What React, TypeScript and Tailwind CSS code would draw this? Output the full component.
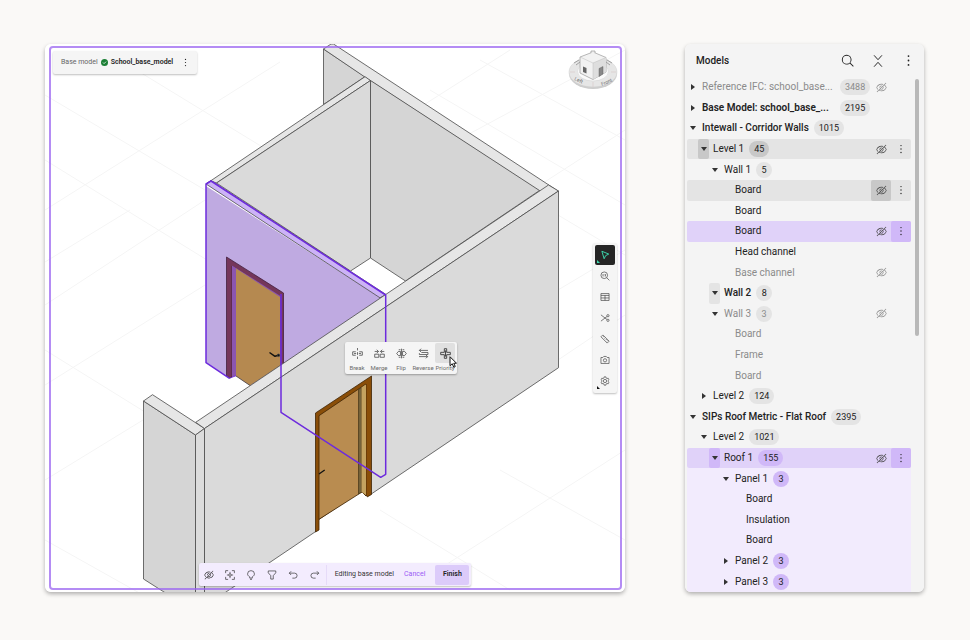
import React, { useState } from "react";
import clsx from "clsx";

type Row = {
  id: number;
  label: string;
  level: number;
  arrow?: "open" | "closed";
  count?: number;
  weight?: "medium" | "bold";
  muted?: boolean;
  truncated?: boolean;
  state?: "hover" | "selected" | "child";
  eye?: boolean;
  menu?: boolean;
  active?: "toggle" | "eye" | "menu" | "toggle-menu";
};

const rows: Row[] = [
  { id: 1, label: "Reference IFC: school_base...", level: 0, arrow: "closed", count: 3488, muted: true, truncated: true, eye: true },
  { id: 2, label: "Base Model: school_base_...", level: 0, arrow: "closed", count: 2195, weight: "bold", truncated: true },
  { id: 3, label: "Intewall - Corridor Walls", level: 0, arrow: "open", count: 1015, weight: "medium" },
  { id: 4, label: "Level 1", level: 1, arrow: "open", count: 45, state: "hover", eye: true, menu: true, active: "toggle" },
  { id: 5, label: "Wall 1", level: 2, arrow: "open", count: 5 },
  { id: 6, label: "Board", level: 3, state: "hover", eye: true, menu: true, active: "eye" },
  { id: 7, label: "Board", level: 3 },
  { id: 8, label: "Board", level: 3, state: "selected", eye: true, menu: true, active: "menu" },
  { id: 9, label: "Head channel", level: 3 },
  { id: 10, label: "Base channel", level: 3, muted: true, eye: true },
  { id: 11, label: "Wall 2", level: 2, arrow: "open", count: 8, weight: "medium", active: "toggle" },
  { id: 12, label: "Wall 3", level: 2, arrow: "open", count: 3, muted: true, eye: true },
  { id: 13, label: "Board", level: 3, muted: true },
  { id: 14, label: "Frame", level: 3, muted: true },
  { id: 15, label: "Board", level: 3, muted: true },
  { id: 16, label: "Level 2", level: 1, arrow: "closed", count: 124 },
  { id: 17, label: "SIPs Roof Metric - Flat Roof", level: 0, arrow: "open", count: 2395, weight: "medium" },
  { id: 18, label: "Level 2", level: 1, arrow: "open", count: 1021 },
  { id: 19, label: "Roof 1", level: 2, arrow: "open", count: 155, state: "selected", eye: true, menu: true, active: "toggle-menu" },
  { id: 20, label: "Panel 1", level: 3, arrow: "open", count: 3, state: "child" },
  { id: 21, label: "Board", level: 4, state: "child" },
  { id: 22, label: "Insulation", level: 4, state: "child" },
  { id: 23, label: "Board", level: 4, state: "child" },
  { id: 24, label: "Panel 2", level: 3, arrow: "closed", count: 3, state: "child" },
  { id: 25, label: "Panel 3", level: 3, arrow: "closed", count: 3, state: "child" },
];

const indents = ["pl-0", "pl-[11px]", "pl-[22px]", "pl-[33px]", "pl-[44px]"];

const EyeOff = ({ className = "size-[11px]" }: { className?: string }) => (
  <svg viewBox="0 0 32 32" fill="currentColor" className={className}>
    <path d="M5.24,22.51l1.43-1.42A14.06,14.06,0,0,1,3.07,16C5.1,10.93,10.7,7,16,7a12.38,12.38,0,0,1,4,.72l1.55-1.56A14.72,14.72,0,0,0,16,5,16.69,16.69,0,0,0,1.06,15.66a1,1,0,0,0,0,.68A16,16,0,0,0,5.24,22.51Z" />
    <path d="M12,15.73a4,4,0,0,1,3.7-3.7l1.81-1.82a6,6,0,0,0-7.33,7.33Z" />
    <path d="M30.94,15.66A16.4,16.4,0,0,0,25.2,8.22L30,3.41,28.59,2,2,28.59,3.41,30l5.1-5.1A15.29,15.29,0,0,0,16,27,16.69,16.69,0,0,0,30.94,16.34,1,1,0,0,0,30.94,15.66ZM20,16a4,4,0,0,1-6,3.44L19.44,14A4,4,0,0,1,20,16Zm-4,9a13.05,13.05,0,0,1-6-1.58l2.54-2.54a6,6,0,0,0,8.35-8.35l2.87-2.87A14.54,14.54,0,0,1,28.93,16C26.9,21.07,21.3,25,16,25Z" />
  </svg>
);

const Dots = ({ className = "size-3" }: { className?: string }) => (
  <svg viewBox="0 0 32 32" fill="currentColor" className={className}>
    <circle cx="16" cy="5" r="2.2" />
    <circle cx="16" cy="16" r="2.2" />
    <circle cx="16" cy="27" r="2.2" />
  </svg>
);

/* Outline icon on a 16 unit grid */
const Line = ({ children, className = "size-[11px]" }: { children: React.ReactNode; className?: string }) => (
  <svg viewBox="0 0 16 16" fill="none" stroke="currentColor" strokeWidth="1.1" className={className}>
    {children}
  </svg>
);

const tools = [
  {
    name: "Select",
    icon: <path strokeWidth="1.5" d="M3 2 14 6.500 9 9 6.600 14Z" />,
  },
  {
    name: "Zoom to fit",
    icon: (
      <>
        <circle cx="6.8" cy="6.8" r="5.3" />
        <path d="m10.6 10.6 4.4 4.4M4.8 5v3.6M8.8 5v3.6M6.8 5.4v.8M6.8 7.6v.8" />
      </>
    ),
  },
  {
    name: "Views",
    icon: <path d="M1.5 2.5h13v11h-13zM1.5 5.5h13M8 5.5v8M1.5 9.5h13" />,
  },
  {
    name: "Cut",
    icon: (
      <>
        <path d="M1.5 3 11.300 10.500M1.5 13 11.300 5.500" />
        <circle cx="12.7" cy="4.3" r="1.8" />
        <circle cx="12.7" cy="11.7" r="1.8" />
      </>
    ),
  },
  {
    name: "Measure",
    icon: <path d="M4.5 1.5 14.5 11.5 11.5 14.5 1.5 4.5ZM6.5 3.5 5 5M8.7 5.7 7.2 7.2M10.9 7.9 9.4 9.4M13 10l-1.5 1.5" />,
  },
  {
    name: "Snapshot",
    icon: (
      <>
        <path d="M1.5 4h3L6 2.3h4L11.5 4h3v9.5h-13z" />
        <circle cx="8" cy="8.5" r="2.6" />
      </>
    ),
  },
  {
    name: "Settings",
    icon: (
      <>
        <path d="M6.7 1.3h2.6l.5 2 1.3.8 2-.6 1.3 2.3-1.5 1.4v1.6l1.5 1.4-1.3 2.3-2-.6-1.3.8-.5 2H6.7l-.5-2-1.3-.8-2 .6-1.3-2.3 1.5-1.4V7.2L1.6 5.8l1.3-2.3 2 .6 1.3-.8Z" />
        <circle cx="8" cy="8" r="2.6" />
      </>
    ),
  },
];

const actions = [
  {
    name: "Break",
    icon: <path d="M8 0v3.500M8 6v4M8 12.500V16M5.5 5.500H1v5h4.500M10.500 5.500H15v5h-4.500M3 8h3M10 8h3" />,
  },
  {
    name: "Merge",
    icon: <path d="M1 9h6v4.500H1zM9 9h6v4.500H9zM1 5h5.500M4 2.500 6.500 5 4 7.500M15 5H9.500M12 2.500 9.500 5 12 7.500" />,
  },
  {
    name: "Flip",
    icon: <path d="M6.500 5H3.500L1 8l2.500 3h3zM9.500 5h3L15 8l-2.500 3h-3zM8 1v14M4 2.500h2.500M12 2.500H9.500M4 13.500h2.500M12 13.500H9.500" />,
  },
  {
    name: "Reverse",
    icon: <path d="M2 3.500h12.500M4.500 1 2 3.500 4.500 6M14 12.500H1.500M11.500 10l2.500 2.500-2.500 2.500M5 6.500h9.500v3H2v-2" />,
  },
  {
    name: "Priority",
    icon: <path strokeWidth="1.400" d="M6.300 1h3.400v5.300H15v3.400H9.700V15H6.300V9.700H1V6.300h5.300ZM8 3.500v9" />,
  },
];

const Scene = () => (
  <svg
    viewBox="45 44 580 548"
    preserveAspectRatio="xMidYMid slice"
    className="absolute inset-0 size-full"
    strokeLinejoin="round"
  >
    {/* Ground grid */}
    <g stroke="#f5f5f5" strokeWidth="1" fill="none">
      <path d="M45 95 205 190M45 160 220 268M120 60 323 184M45 262 130 210M45 210 280 62M45 305 205 200M45 385 205 285M45 350 145 412M400 120 510 50M430 155 625 50M480 60 625 140M430 90 625 205M540 185 625 130M558 290 625 250M558 360 625 315M430 575 625 450M500 470 625 540M380 510 510 590M45 480 143 420M45 540 143 595M558 215 625 255" />
    </g>

    <g stroke="#4a4a4a" strokeWidth="0.8">
      {/* Back walls */}
      <path d="M323.500 49 365 76.700 323.500 104.500Z" fill="#d5d5d5" />
      <path d="M323.500 49 331 44 333.500 44 558 191 548.500 197 370 80.500Z" fill="#e6e6e6" />
      <path d="M206 184 365 76.700 370.500 80.500 216.500 183 211 181Z" fill="#e6e6e6" />
      <path d="M216.500 183 370.500 80.500V258L350.500 271Z" fill="#dadada" />
      <path d="M370.500 80.500 539.500 190.500 405.500 281 370.500 258Z" fill="#d5d5d5" />

      {/* Left stub */}
      <path d="M143.500 401 195.500 435V612L143.500 579Z" fill="#d5d5d5" />
      <path d="M143.500 401 152.500 394.700 204.500 428.500 195.500 435Z" fill="#e6e6e6" />
      <path d="M195.500 435 204.500 428.500V600H195.500Z" fill="#dcdcdc" />

      {/* Wall being edited */}
      <path d="M206 186V362.700L229.500 378.300 236 375.700V266L280.500 295V366L386 295 380 297.500Z" fill="#bfaae1" stroke="none" />
      <path d="M206 184 211 180.500 386 294.500 380 297.800Z" fill="#ccb3f6" />
      <path d="M226.500 257 283.500 293V364L280.500 367V297L232 266V377L229.500 378 226.500 376Z" fill="#74365a" stroke="#43203d" />
      <path d="M232 265.500 280.500 296V366L250 385.500 236 376 232 377Z" fill="#8b55b0" stroke="none" />
      <path d="M236 268.500 280 297V366L250 385.500 236 376Z" fill="#b58950" stroke="none" />
      <path d="M236 376 250 385.500" />
      <path d="M269.500 352.500 275 356.300 279 355" stroke="#111" strokeWidth="1.500" fill="none" />
      <circle cx="278.500" cy="355.300" r="1.300" fill="#111" />

      {/* Front wall */}
      <path d="M548.500 185 558.500 191 204.500 428.500 195.700 422.300Z" fill="#e6e6e6" />
      <path d="M558.500 191V367.700L226 592 204.500 607V428.500Z" fill="#dadada" />
      <path d="M315.500 532 319 530 319 519.500 358.500 493 362 492 367.500 497 371.500 495 345 535Z" fill="#fff" stroke="none" />

      {/* Front door */}
      <path d="M315.500 413 371.500 376V494.500L367.500 496.700 362 492 358.500 493 319 519.300V530L315.500 532Z" fill="#8a4e08" stroke="#3f2505" />
      <path d="M319 415.700 366 384V496L362 492 319 519.300Z" fill="#b98c50" stroke="#3f2505" />
      <path d="M358.500 389.500 361.500 387.500V492L358.500 494Z" fill="#75623a" stroke="#4c3b1a" />
      <path d="M361.500 387.500 366 384.500V495L361.500 492Z" fill="#c4a25f" stroke="none" />
      <path d="M319 474 324.700 470" stroke="#111" strokeWidth="1.300" />
    </g>

    {/* Edit outline */}
    <g stroke="#6d2bdd" strokeWidth="1.500" fill="none">
      <path d="M229.500 378.300 206 362.700V184L211 181 385.700 295V474.300L380.700 477.300 281 412.300V294" />
      <path d="M229.500 378.300 236 375.700" strokeWidth="0.800" />
    </g>
  </svg>
);

const ViewCube = () => (
  <svg viewBox="0 0 50 42" className="h-[42px] w-[50px]" strokeLinejoin="round">
    <ellipse cx="25" cy="25.500" rx="24" ry="15.500" fill="#cdcdcd" />
    <ellipse cx="25" cy="24" rx="24" ry="15" fill="#e6e6e6" stroke="#d2d2d2" strokeWidth="0.500" />
    <ellipse cx="25" cy="23.500" rx="15.500" ry="9.500" fill="#fafafa" stroke="#d0d0d0" strokeWidth="0.500" />
    <path d="M2 24h5M43 24h5M25 34v5" stroke="#d0bcbc" strokeWidth="0.500" />
    <path d="m6 15 5-3M8 17l4-3M39 12l5 3M38 14l4 3" stroke="#999" strokeWidth="0.900" />
    <path d="M25 4 38 9.500V24L25 31.500 12 25V9Z" fill="#f2f2f2" stroke="#9a9a9a" strokeWidth="0.700" />
    <path d="M25 15 38 9.500V24L25 31.500Z" fill="#dedede" />
    <path d="M12 9 25 15 38 9.500M25 15V31.500" stroke="#bdbdbd" strokeWidth="0.500" fill="none" />
    <path d="M23 5V3h4v2" stroke="#999" strokeWidth="0.700" fill="#eee" />
    <path d="M15 18.500 18.500 20v5.500L15 24Z" fill="#666" />
    <path d="M31 20.500 35 18.500V26L31 28.500Z" fill="#888" stroke="#555" strokeWidth="0.400" />
    <text x="6" y="32" fontSize="5" fill="#666" transform="rotate(24 6 32)">Left</text>
    <text x="34" y="38" fontSize="5" fill="#666" transform="rotate(-24 34 38)">Front</text>
  </svg>
);

const IconButton = ({ label, children, className }: { label: string; children: React.ReactNode; className?: string }) => (
  <button aria-label={label} className={clsx("flex items-center justify-center", className)}>
    {children}
  </button>
);

const TreeRow = ({ row }: { row: Row }) => {
  const purple = row.state === "selected" || row.state === "child";
  const toggleActive = row.active === "toggle" || row.active === "toggle-menu";
  const menuActive = row.active === "menu" || row.active === "toggle-menu";

  return (
    <li
      className={clsx(
        "flex min-h-5 items-stretch",
        indents[row.level],
        row.state === "hover" && "rounded-xs bg-[#e4e4e4]",
        row.state === "selected" && "rounded-xs bg-[#e0d2f9]",
        row.state === "child" && "bg-[#f2ebfd]",
        row.muted ? "text-[#8b8b8b]" : "text-[#222]"
      )}
    >
      {row.arrow ? (
        <IconButton
          label={`Toggle ${row.label}`}
          className={clsx(
            "w-[11px] rounded-xs text-[#333]",
            toggleActive && (purple ? "bg-[#d0b8f8]" : row.state === "hover" ? "bg-[#c8c8c8]" : "bg-[#e4e4e4]")
          )}
        >
          <svg viewBox="0 0 6 6" className="size-[6px]" fill="currentColor">
            <path d={row.arrow === "open" ? "M0 1h6L3 5Z" : "M1 0v6l4-3Z"} />
          </svg>
        </IconButton>
      ) : (
        <span className="w-[11px]" />
      )}
      <span
        className={clsx(
          "ml-1 self-center whitespace-nowrap",
          row.truncated && "w-[133px]",
          row.weight === "bold" && "font-semibold",
          row.weight === "medium" && "font-medium"
        )}
      >
        {row.label}
      </span>
      {row.count !== undefined && (
        <span
          className={clsx(
            "ml-[5px] flex h-4 min-w-4 items-center justify-center self-center rounded-full px-[5px] text-[9px]",
            purple ? "bg-[#d0b8f8]" : row.state === "hover" ? "bg-[#c8c8c8]" : "bg-[#e4e4e4]"
          )}
        >
          {row.count}
        </span>
      )}
      <span className="ml-auto flex">
        {row.eye && (
          <IconButton
            label={`Show ${row.label}`}
            className={clsx("w-5 rounded-xs", !row.muted && "text-[#444]", row.active === "eye" && "bg-[#c8c8c8]")}
          >
            <EyeOff />
          </IconButton>
        )}
        {row.menu ? (
          <IconButton label={`${row.label} options`} className={clsx("w-5 rounded-xs", menuActive && "bg-[#d0b8f8]")}>
            <Dots className="size-[10px]" />
          </IconButton>
        ) : (
          <span className="w-5" />
        )}
      </span>
    </li>
  );
};

const Viewer = () => {
  const [tool, setTool] = useState("Select");

  return (
    <section className="relative min-w-0 flex-1 overflow-hidden rounded-md bg-white">
      <Scene />
      <div className="pointer-events-none absolute top-[2px] right-[3px] bottom-[2px] left-1 rounded-sm border-2 border-[#9b66f0]/75" />

      {/* Model tag */}
      <div className="absolute top-[7px] left-2 flex h-[23px] items-center rounded-xs bg-[#f5f5f5] pr-1 pl-2 text-[7px] shadow-[0_1px_2px_rgba(0,0,0,0.25)]">
        <span className="text-[#666]">Base model</span>
        <svg viewBox="0 0 16 16" className="mx-[3px] size-[7px]">
          <circle cx="8" cy="8" r="8" fill="#1b7f35" />
          <path d="m4.500 8 2.500 2.500 4.500-4.500" fill="none" stroke="#fff" strokeWidth="1.800" />
        </svg>
        <span className="font-semibold text-[#222]">School_base_model</span>
        <IconButton label="Model options" className="ml-1 h-5 w-4 text-[#222]">
          <Dots className="size-[9px]" />
        </IconButton>
      </div>

      <div className="absolute top-1 right-[7px]">
        <ViewCube />
      </div>

      {/* Tool rail */}
      <div className="absolute inset-y-0 right-2 flex items-center">
        <div className="flex flex-col gap-px rounded-xs bg-[#f5f5f5] p-[2px] shadow-[0_1px_2px_rgba(0,0,0,0.25)]">
          {tools.map((item) => (
            <button
              key={item.name}
              aria-label={item.name}
              onClick={() => setTool(item.name)}
              className={clsx(
                "relative flex size-5 items-center justify-center rounded-xs",
                item.name === tool ? "bg-[#262626] text-[#3ddbb0]" : "text-[#444]"
              )}
            >
              <Line className="size-[10px]">{item.icon}</Line>
              {(item.name === "Select" || item.name === "Settings") && (
                <svg viewBox="0 0 4 4" className="absolute bottom-[2px] left-[2px] size-[3px]">
                  <path d="M0 0v4h4Z" fill={item.name === tool ? "#3ddbb0" : "#111"} />
                </svg>
              )}
            </button>
          ))}
        </div>
      </div>

      <div className="absolute top-[298px] left-[300px] flex rounded-xs bg-[#f5f5f5] px-px shadow-[0_1px_2px_rgba(0,0,0,0.3)]">
        {actions.map((action) => (
          <button key={action.name} className="flex h-8 w-[22px] flex-col items-center pt-px text-[6px] text-[#6a6a6a]">
            <span
              className={clsx(
                "flex size-5 items-center justify-center rounded-xs text-[#444]",
                action.name === "Priority" && "bg-[#e0e0e0]"
              )}
            >
              <Line>{action.icon}</Line>
            </span>
            <span className="leading-[10px]">{action.name}</span>
          </button>
        ))}
        <svg viewBox="0 0 16 24" className="absolute top-[14px] right-0 h-[12px] w-2">
          <path d="M2 1.500v18l4.500-4 3 7 3-1.500-3-6.500h5.500Z" fill="#fff" stroke="#111" strokeWidth="2" />
        </svg>
      </div>

      {/* Edit bar */}
      <div className="absolute inset-x-0 bottom-[6px] flex justify-center">
        <div className="flex h-[23px] items-center rounded-xs bg-[#f3ecfe] pr-[2px] text-[7px] whitespace-nowrap text-[#333] shadow-[0_1px_2px_rgba(0,0,0,0.25)]">
          <div className="flex border-r border-[#e6dbf8]">
            <IconButton label="Hide" className="h-5 w-[21px]">
              <EyeOff className="size-[10px]" />
            </IconButton>
            <IconButton label="Isolate" className="h-5 w-[21px]">
              <Line className="size-[10px]">
                <path d="M1 5V1h4M11 1h4v4M15 11v4h-4M5 15H1v-4M8 3v3M8 10v3M3 8h3M10 8h3" />
                <circle cx="8" cy="8" r="2" />
              </Line>
            </IconButton>
            <IconButton label="Highlight" className="h-5 w-[21px]">
              <Line className="size-[10px]">
                <path d="M6 13V11C3.500 9.500 2.500 8 2.500 6.300a5.500 5.300 0 0 1 11 0c0 1.700-1 3.200-3.500 4.700v2ZM6.500 15h3" />
              </Line>
            </IconButton>
            <IconButton label="Filter" className="h-5 w-[21px]">
              <Line className="size-[10px]">
                <path d="M2 1.500h12v3L10 9v5.500H6V9L2 4.500Z" />
              </Line>
            </IconButton>
            <IconButton label="Undo" className="h-5 w-[21px]">
              <Line className="size-[10px]">
                <path d="M5 2 2 5l3 3M2 5h8.500a4 4 0 0 1 0 8H7" />
              </Line>
            </IconButton>
            <IconButton label="Redo" className="h-5 w-[22px]">
              <Line className="size-[10px]">
                <path d="m11 2 3 3-3 3M14 5H5.500a4 4 0 0 0 0 8H9" />
              </Line>
            </IconButton>
          </div>
          <span className="ml-2">Editing base model</span>
          <button className="ml-[10px] text-[#9a5cf5]">Cancel</button>
          <button className="ml-[10px] h-5 w-[34px] rounded-xs bg-[#dccbfa] font-semibold text-[#222]">Finish</button>
        </div>
      </div>
    </section>
  );
};

const ModelsPanel = () => (
  <aside className="flex w-[239px] shrink-0 flex-col overflow-hidden rounded-md bg-[#f4f4f4] text-[10px] leading-4">
    <header className="flex h-[33px] items-center pr-px pl-[11px] text-[#222]">
      <h2 className="mr-auto font-medium">Models</h2>
      <IconButton label="Search" className="h-6 w-[30px]">
        <svg viewBox="0 0 32 32" fill="currentColor" className="size-[14px]">
          <path d="M29,27.5859l-7.5521-7.5521a11.0177,11.0177,0,1,0-1.4141,1.4141L27.5859,29ZM4,13a9,9,0,1,1,9,9A9.01,9.01,0,0,1,4,13Z" />
        </svg>
      </IconButton>
      <IconButton label="Collapse all" className="h-6 w-[30px]">
        <Line className="size-[14px]">
          <path d="m3.500 1.500 4.500 5 4.500-5M3.500 14.500l4.500-5 4.500 5" />
        </Line>
      </IconButton>
      <IconButton label="Panel options" className="h-6 w-[30px]">
        <Dots className="size-[13px]" />
      </IconButton>
    </header>
    <div className="flex flex-1 pl-[2px]">
      <ul className="grid flex-1 auto-rows-fr">
        {rows.map((row) => (
          <TreeRow key={row.id} row={row} />
        ))}
      </ul>
      <div className="w-[13px] pt-[2px] pl-1">
        <div className="h-1/2 w-1 rounded-full bg-[#b8b8b8]" />
      </div>
    </div>
  </aside>
);

const App = () => (
  <main className="flex min-h-screen gap-[60px] bg-[#faf9f7] pt-11 pr-[46px] pb-12 pl-[45px] font-['Roboto','Open_Sans',sans-serif]">
    <div className="flex min-w-0 flex-1 rounded-md shadow-[0_2px_4px_rgba(0,0,0,0.3)]">
      <Viewer />
    </div>
    <div className="flex rounded-md shadow-[0_2px_4px_rgba(0,0,0,0.3)]">
      <ModelsPanel />
    </div>
  </main>
);

export default App;
